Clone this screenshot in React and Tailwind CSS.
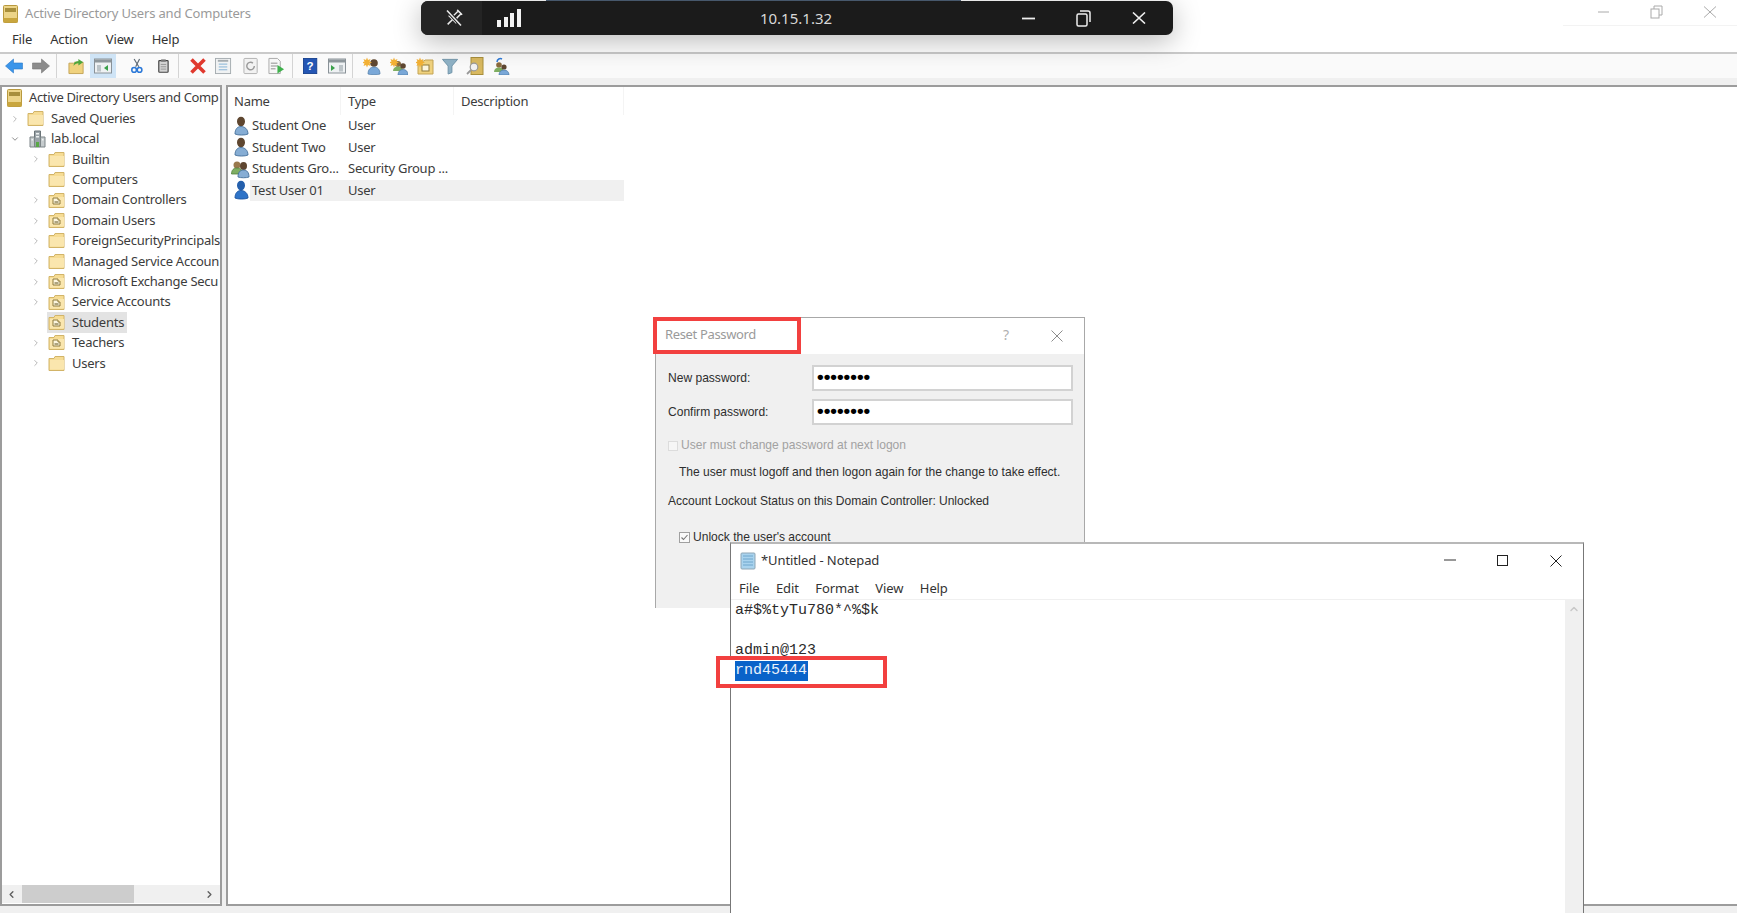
import React from 'react';
import { ChevronRight, ChevronDown, ChevronLeft, ChevronUp } from 'lucide-react';

// small drawings for the MMC tree, list and toolbar
function Folder({ ou }) {
  return (
    <svg width="17" height="17" viewBox="0 0 17 17" className="shrink-0">
      <path d="M1 3.500h5l1-2h9v14H1z" fill="#f6dc94" stroke="#d2b468" strokeWidth="1" />
      <path d="M2 5h14v9.500H2z" fill="#fae6ae" />
      {ou && <path d="M5 6h5v2h2v4H5z" fill="#fdf6df" stroke="#8f7a3a" strokeWidth="1" />}
      {ou && <path d="M6.500 10h4" stroke="#5f5320" strokeWidth="1" />}
    </svg>
  );
}

function AdIcon() {
  return (
    <svg width="15" height="18" viewBox="0 0 15 18" className="shrink-0">
      <rect x="0.500" y="0.500" width="14" height="17" rx="1" fill="#ecd488" stroke="#b8993f" />
      <rect x="2" y="3" width="11" height="4" fill="#a88f3c" />
      <rect x="0.500" y="13" width="14" height="4.500" fill="#c9a63e" />
    </svg>
  );
}

function DomainIcon() {
  return (
    <svg width="17" height="18" viewBox="0 0 17 18" className="shrink-0">
      <path d="M5.500 1h6v16h-6z" fill="#9aa3a8" stroke="#6b7478" />
      <path d="M1 7h4.500v10H1zM11.500 7H16v10h-4.500z" fill="#c6ccce" stroke="#7d8588" />
      <path d="M7 3h3v1.500H7zM7 6h3v1.500H7zM2.500 9h1.500v1.500H2.500zM13 9h1.500v1.500H13z" fill="#eef2f2" />
      <path d="M7 12h3v5H7z" fill="#59a845" />
    </svg>
  );
}

function UserIcon({ selected }) {
  const skin = selected ? '#2560ad' : '#5e4630';
  const body = selected ? '#2f74c8' : '#86add4';
  return (
    <svg width="17" height="20" viewBox="0 0 16 20" className="shrink-0">
      <ellipse cx="7.500" cy="5.500" rx="4" ry="4.800" fill={skin} />
      <path d="M1.500 18c0-5 2.500-7.500 6-7.500s7 2.500 7 7.500c-3 1.400-10 1.400-13 0z" fill={body} stroke={selected ? '#1d55a0' : '#456f9a'} strokeWidth="0.900" />
    </svg>
  );
}

function GroupIcon() {
  return (
    <svg width="19" height="20" viewBox="0 0 19 20" className="shrink-0">
      <circle cx="6" cy="6" r="3.500" fill="#9a7a4e" />
      <path d="M0.500 15c0-4 2.200-6 5.500-6s5.500 2 5.500 6z" fill="#7fae62" stroke="#52803c" strokeWidth="0.800" />
      <ellipse cx="12.500" cy="7" rx="3.500" ry="4" fill="#5e4630" />
      <path d="M7 18c0-4.500 2-7 5.500-7s5.500 2.500 5.500 7c-2.500 1-8.500 1-11 0z" fill="#86add4" stroke="#456f9a" strokeWidth="0.900" />
    </svg>
  );
}

function Star() {
  return <path d="M4 0.500l1 2.500 2.500-1-1 2.500 2.500 1-2.500 1 1 2.500-2.500-1-1 2.500-1-2.500-2.500 1 1-2.500-2.500-1 2.500-1-1-2.500 2.500 1z" fill="#f2b035" />;
}

function Tool({ w = 18, ml = 0, children, vb = '0 0 18 18' }) {
  return (
    <svg width={w} height="18" viewBox={vb} className="shrink-0" style={{ marginLeft: ml }}>
      {children}
    </svg>
  );
}

function Sep({ ml }) {
  return <div className="h-[24px] w-px shrink-0 bg-[#d4d4d4]" style={{ marginLeft: ml }} />;
}

function Toolbar() {
  return (
    <div className="flex h-[24px] items-center bg-[#fafafa] pl-[4px]">
      <Tool w={19}><path d="M1 9l8-7v4h9v6H9v4z" fill="#3a95ea" stroke="#2a78c8" strokeWidth="0.600" /></Tool>
      <Tool w={19} ml={8}><path d="M18 9l-8-7v4H1v6h9v4z" fill="#8c8c8c" stroke="#777" strokeWidth="0.600" /></Tool>
      <Sep ml={6} />
      <Tool w={17} ml={11}>
        <path d="M1 6h5l1-1h9v12H1z" fill="#f0d27e" stroke="#c4a455" />
        <path d="M6 9c0-4 2-5 5-5V1.500L16 5l-5 3.500V6c-2 0-4 1-5 3z" fill="#4ea53c" />
      </Tool>
      <div className="ml-[5px] flex h-[24px] w-[26px] shrink-0 items-center justify-center bg-[#cfe4f6]">
        <Tool>
          <rect x="0.500" y="2" width="17" height="14" fill="#eef1f3" stroke="#8a9298" />
          <rect x="1" y="2.500" width="16" height="3" fill="#8e979c" />
          <rect x="3" y="8" width="4" height="6.500" fill="#bcc4c8" />
          <path d="M14 8v6l-4-3z" fill="#3aa04a" />
        </Tool>
      </div>
      <Tool w={14} ml={15}>
        <path d="M11 0L6 10M4 0l6 10" stroke="#5e6a75" strokeWidth="1.500" />
        <circle cx="4" cy="14" r="3" fill="none" stroke="#2c79d8" strokeWidth="2" />
        <circle cx="11" cy="14" r="3" fill="none" stroke="#2c79d8" strokeWidth="2" />
      </Tool>
      <Tool w={14} ml={13}>
        <rect x="1" y="2" width="12" height="15" rx="1" fill="#d4d4d4" stroke="#444" strokeWidth="1.500" />
        <rect x="4" y="0.500" width="6" height="3" fill="#777" />
        <path d="M3.500 7h7M3.500 10h7M3.500 13h7" stroke="#888" />
      </Tool>
      <Sep ml={6} />
      <Tool ml={10}><path d="M2.500 2.500l13 13M15.500 2.500l-13 13" stroke="#e0392e" strokeWidth="3.600" /></Tool>
      <Tool w={17} ml={8}>
        <rect x="0.500" y="1" width="16" height="16" fill="#f0f2f3" stroke="#a5acb0" />
        <path d="M3 2.500h11v2H3z" fill="#a5acb0" />
        <path d="M4 7h9M4 10h9M4 13h9" stroke="#7fb0d6" />
      </Tool>
      <Tool w={17} ml={11}>
        <rect x="1" y="1" width="14" height="16" rx="1" fill="#f2f2f2" stroke="#b0b0b0" />
        <path d="M12 9a4 4 0 1 1-1.500-3.100" fill="none" stroke="#9a9a9a" strokeWidth="1.500" />
      </Tool>
      <Tool w={17} ml={8}>
        <path d="M1 1h9l3 3v13H1z" fill="#f7f7f7" stroke="#a8a8a8" />
        <path d="M3 6h7M3 9h7M3 12h5" stroke="#888" />
        <path d="M10 8l7 4.500-7 4.500z" fill="#3fb14c" />
      </Tool>
      <Sep ml={7} />
      <Tool w={16} ml={10}>
        <rect x="0.500" y="0.500" width="15" height="17" fill="#2456b4" stroke="#17408e" />
        <text x="8" y="14" textAnchor="middle" fontSize="13" fontWeight="700" fontFamily="'Liberation Sans', sans-serif" fill="#fff">?</text>
      </Tool>
      <Tool ml={9}>
        <rect x="0.500" y="2" width="17" height="14" fill="#eef1f3" stroke="#8a9298" />
        <rect x="1" y="2.500" width="16" height="3" fill="#8e979c" />
        <path d="M3 8v6l4-3z" fill="#3aa04a" />
        <rect x="11" y="8" width="4" height="6.500" fill="#bcc4c8" />
      </Tool>
      <Sep ml={6} />
      <Tool w={19} ml={10} vb="0 0 19 18">
        <circle cx="11" cy="6" r="3.800" fill="#5e4630" />
        <path d="M5 17c0-4.500 2.500-7 6-7s6 2.500 6 7c-3 1-9 1-12 0z" fill="#7aa8d8" stroke="#4f7ba6" strokeWidth="0.700" />
        <Star />
      </Tool>
      <Tool w={18} ml={8}>
        <circle cx="8" cy="7" r="3" fill="#8a6a3e" />
        <path d="M3 14c0-3 2-4.500 5-4.500s5 1.500 5 4.500z" fill="#7fae62" />
        <circle cx="13" cy="9" r="2.800" fill="#5e4630" />
        <path d="M8 18c0-3.500 2-5.500 5-5.500s5 2 5 5.500z" fill="#7aa8d8" stroke="#4f7ba6" strokeWidth="0.700" />
        <Star />
      </Tool>
      <Tool w={18} ml={8}>
        <path d="M2 4h6l1-1h8v14H2z" fill="#f0d27e" stroke="#c4a455" />
        <rect x="6" y="8" width="7" height="6" fill="#fdf6df" stroke="#8f7a3a" />
        <Star />
      </Tool>
      <Tool w={17} ml={8}><path d="M0.500 2h16l-6 7v7l-4 1.500V9z" fill="#8fb2c6" stroke="#6f93a8" /></Tool>
      <Tool w={18} ml={7}>
        <rect x="5" y="0.500" width="12" height="17" fill="#d9b960" stroke="#a88f3c" />
        <circle cx="8" cy="10" r="3.800" fill="#f2f2f2" stroke="#999" strokeWidth="1.200" />
        <path d="M5 13l-4 4" stroke="#999" strokeWidth="1.800" />
      </Tool>
      <Tool w={18} ml={8}>
        <path d="M5 5c0-3 3-4 5-3" fill="none" stroke="#2c79d8" strokeWidth="1.500" />
        <circle cx="7" cy="8" r="2.800" fill="#8a6a3e" />
        <path d="M2 15c0-3 2-4.500 5-4.500s5 1.500 5 4.500z" fill="#7fae62" />
        <circle cx="12" cy="10" r="2.600" fill="#5e4630" />
        <path d="M7 18c0-3 2-5 5-5s5 2 5 5z" fill="#7aa8d8" stroke="#4f7ba6" strokeWidth="0.700" />
      </Tool>
    </div>
  );
}

const tree = [
  { name: 'Builtin', arrow: true },
  { name: 'Computers' },
  { name: 'Domain Controllers', arrow: true, ou: true },
  { name: 'Domain Users', arrow: true, ou: true },
  { name: 'ForeignSecurityPrincipals', arrow: true },
  { name: 'Managed Service Accoun', arrow: true },
  { name: 'Microsoft Exchange Secu', arrow: true, ou: true },
  { name: 'Service Accounts', arrow: true, ou: true },
  { name: 'Students', ou: true, selected: true },
  { name: 'Teachers', arrow: true, ou: true },
  { name: 'Users', arrow: true },
];

function Tree() {
  return (
    <div className="flex w-[222px] shrink-0 flex-col border-2 border-[#9c9c9c] bg-white">
      <div className="flex-1 overflow-hidden whitespace-nowrap pt-[1px] text-[13px] tracking-[-0.250px] text-[#3c3c3c]">
        <div className="flex h-[20.400px] items-center pl-[5px]">
          <AdIcon />
          <span className="ml-[7px] tracking-[-0.350px]">Active Directory Users and Comp</span>
        </div>
        <div className="flex h-[20.400px] items-center pl-[8px]">
          <ChevronRight size={10} className="text-[#aaa]" />
          <span className="ml-[7px]"><Folder /></span>
          <span className="ml-[7px]">Saved Queries</span>
        </div>
        <div className="flex h-[20.400px] items-center pl-[8px]">
          <ChevronDown size={10} className="text-[#777]" />
          <span className="ml-[9px]"><DomainIcon /></span>
          <span className="ml-[5px]">lab.local</span>
        </div>
        {tree.map((t) => (
          <div key={t.name} className="flex h-[20.400px] items-center pl-[29px]">
            <span className="w-[10px] shrink-0">{t.arrow && <ChevronRight size={10} className="text-[#aaa]" />}</span>
            <div className={`ml-[6px] flex h-[20.400px] items-center pl-[1px] pr-[3px] ${t.selected ? 'bg-[#e3e3e3]' : ''}`}>
              <Folder ou={t.ou} />
              <span className="ml-[7px]">{t.name}</span>
            </div>
          </div>
        ))}
      </div>
      <div className="mb-[1px] flex h-[18px] shrink-0 items-center justify-between bg-[#f0f0f0]">
        <div className="flex h-full items-center">
          <ChevronLeft size={11} strokeWidth={3} className="ml-[4px] text-[#606060]" />
          <div className="ml-[5px] h-full w-[112px] bg-[#cdcdcd]" />
        </div>
        <ChevronRight size={11} strokeWidth={3} className="mr-[5px] text-[#606060]" />
      </div>
    </div>
  );
}

function ListRow({ name, type, icon, selected }) {
  return (
    <div className="flex h-[21.500px] w-[396px] items-center">
      <div className="flex w-[22px] shrink-0 justify-end">{icon}</div>
      <div className={`flex h-full flex-1 items-center pl-[2px] ${selected ? 'bg-[#f0f0f0]' : ''}`}>
        <span className="w-[96px] shrink-0 whitespace-nowrap">{name}</span>
        <span className="whitespace-nowrap">{type}</span>
      </div>
    </div>
  );
}

function List() {
  return (
    <div className="ml-[4px] min-w-0 flex-1 border-2 border-r-0 border-[#9c9c9c] bg-white text-[13px] tracking-[-0.250px] text-[#3c3c3c]">
      <div className="flex h-[28px] w-[396px] items-center">
        <div className="h-full w-[113px] border-r border-[#f4f4f4] pl-[6px] leading-[29px]">Name</div>
        <div className="h-full w-[113px] border-r border-[#f4f4f4] pl-[7px] leading-[29px]">Type</div>
        <div className="h-full w-[170px] border-r border-[#f4f4f4] pl-[7px] leading-[29px]">Description</div>
      </div>
      <ListRow name="Student One" type="User" icon={<UserIcon />} />
      <ListRow name="Student Two" type="User" icon={<UserIcon />} />
      <ListRow name="Students Gro..." type="Security Group ..." icon={<GroupIcon />} />
      <ListRow name="Test User 01" type="User" icon={<UserIcon selected />} selected />
    </div>
  );
}

function RemoteBar() {
  return (
    <div className="absolute left-[421px] top-[1px] flex h-[34px] w-[752px] items-center rounded-[7px] bg-[#1b1b1b] text-[#e8e8e8] shadow-[0_6px_28px_rgba(0,0,0,0.28)]">
      <div className="flex h-full w-[61px] items-center justify-center rounded-l-[7px] bg-[#242424]">
        <svg width="20" height="20" viewBox="0 0 20 20" fill="none" stroke="#ececec" strokeWidth="1.500" className="ml-[4px]">
          <g transform="rotate(45 10 10)">
            <path d="M6.500 2h7M8 2v6l-2.500 4h9L12 8V2M10 12v7" />
          </g>
          <path d="M3 2.500L17 17.500" stroke="#242424" strokeWidth="3.500" />
          <path d="M3 2.500L17 17.500" />
        </svg>
      </div>
      <svg width="24" height="18" viewBox="0 0 24 18" className="ml-[15px] shrink-0">
        <path d="M0 11h4v7H0zM7 8h4v10H7zM13 4h4v14h-4zM20 0h4v18h-4z" fill="#f2f2f2" />
      </svg>
      <div className="flex-1 pl-[50px] text-center font-['Noto_Sans'] text-[15px] text-[#d8d8d8]">10.15.1.32</div>
      <svg width="16" height="3" viewBox="0 0 16 3" className="shrink-0"><path d="M1 1.500h13" stroke="#eee" strokeWidth="1.800" /></svg>
      <svg width="18" height="17" viewBox="0 0 18 17" className="ml-[38px] shrink-0" fill="none" stroke="#eee" strokeWidth="1.500">
        <rect x="2" y="4" width="10" height="12" rx="1.500" />
        <path d="M5 1h8a2 2 0 0 1 2 2v9" />
      </svg>
      <svg width="14" height="12" viewBox="0 0 14 12" className="ml-[39px] mr-[27px] shrink-0"><path d="M1 0.500l12 11M13 0.500l-12 11" stroke="#eee" strokeWidth="1.600" /></svg>
    </div>
  );
}

function DialogRow({ label, dots }) {
  return (
    <div className="flex items-center">
      <span className="w-[144px] shrink-0">{label}</span>
      <div className="flex h-[26px] w-[261px] items-center border-2 border-[#d2d2d2] bg-white pb-[3px] pl-[3px] text-[19px] font-bold leading-none text-black">
        {dots}
      </div>
    </div>
  );
}

function ResetDialog() {
  return (
    <div className="absolute left-[655px] top-[317px] flex h-[291px] w-[430px] flex-col border-r border-t border-l border-[#a8a8a8] font-['Liberation_Sans'] text-[12.050px] text-[#2e2e2e]">
      <div className="relative flex h-[36px] shrink-0 items-center bg-white">
        <span className="ml-[9px] mt-[-2px] font-['Noto_Sans'] text-[13px] tracking-[-0.350px] text-[#9a9a9a]">Reset Password</span>
        <span className="absolute left-[347px] top-[6px] font-['Noto_Sans'] text-[14px] text-[#b0b0b0]">?</span>
        <svg width="12" height="12" viewBox="0 0 12 12" className="absolute left-[395px] top-[12px]"><path d="M0.500 0.500l11 11M11.500 0.500l-11 11" stroke="#8c8c8c" /></svg>
        <div className="absolute -left-[3px] -top-[1px] h-[37px] w-[148px] border-[4px] border-[#f2403f]" />
      </div>
      <div className="flex-1 bg-[#f0f0f0] pl-[12px] pt-[11px]">
        <div className="flex flex-col gap-[8px]">
          <DialogRow label="New password:" dots="••••••••" />
          <DialogRow label="Confirm password:" dots="••••••••" />
        </div>
        <div className="mt-[12px] flex h-[17px] items-center text-[#a2a2a2]">
          <span className="h-[10px] w-[10px] border border-[#dcdcdc] bg-[#f6f6f6]" />
          <span className="ml-[3px]">User must change password at next logon</span>
        </div>
        <div className="ml-[11px] mt-[10px] h-[17px] leading-[17px]">The user must logoff and then logon again for the change to take effect.</div>
        <div className="mt-[12px] h-[17px] leading-[17px] tracking-[-0.030px]">Account Lockout Status on this Domain Controller: Unlocked</div>
        <div className="ml-[11px] mt-[19px] flex h-[17px] items-center">
          <svg width="11" height="11" viewBox="0 0 11 11" className="shrink-0">
            <rect x="0.500" y="0.500" width="10" height="10" fill="#fafafa" stroke="#a0a0a0" />
            <path d="M2.500 5.500l2 2 4-4.500" fill="none" stroke="#777" strokeWidth="1.100" />
          </svg>
          <span className="ml-[3px]">Unlock the user's account</span>
        </div>
      </div>
    </div>
  );
}

function Notepad() {
  return (
    <div className="absolute bottom-0 left-[730px] top-[542px] flex w-[854px] flex-col border-x border-x-[#777] border-t-2 border-t-[#b8b8b8] bg-white font-['Noto_Sans'] text-[13px] tracking-[-0.100px] text-[#333]">
      <div className="flex h-[33px] shrink-0 items-center pl-[8px]">
        <svg width="18" height="18" viewBox="0 0 18 18" className="shrink-0">
          <rect x="2" y="1" width="14" height="16" rx="1" fill="#a9d3ee" stroke="#8fa6b5" />
          <path d="M4 4h10M4 7h10M4 10h10M4 13h10" stroke="#6fa6cc" />
        </svg>
        <span className="ml-[4px]">*Untitled - Notepad</span>
        <svg width="12" height="2" viewBox="0 0 12 2" className="ml-auto mt-[-2px] shrink-0"><path d="M0 1h12" stroke="#333" /></svg>
        <div className="ml-[41px] h-[11px] w-[11px] shrink-0 border border-[#222]" />
        <svg width="12" height="12" viewBox="0 0 12 12" className="ml-[42px] mr-[21px] shrink-0"><path d="M0.500 0.500l11 11M11.500 0.500l-11 11" stroke="#222" /></svg>
      </div>
      <div className="flex h-[23px] shrink-0 items-center gap-[16.500px] border-b border-[#f0f0f0] pl-[8px] pt-[2px]">
        <span>File</span>
        <span>Edit</span>
        <span>Format</span>
        <span>View</span>
        <span>Help</span>
      </div>
      <div className="flex min-h-0 flex-1">
        <div className="relative flex-1 pl-[4px] pt-[1px] font-['Liberation_Mono'] text-[15px] leading-[20px] tracking-normal text-[#2b2b2b]">
          <div className="absolute -left-[15px] top-[56px] h-[32px] w-[171px] border-[4px] border-[#f2403f] bg-white" />
          <div className="relative h-[20px]">a#$%tyTu780*^%$k</div>
          <div className="relative h-[20px]" />
          <div className="relative h-[20px]">admin@123</div>
          <div className="relative h-[20px]"><span className="inline-block h-[20px] w-[73px] bg-[#0a63c9] text-[#eaf2fb]">rnd45444</span></div>
        </div>
        <div className="flex w-[18px] shrink-0 justify-center bg-[#f0f0f0] pt-[3px]">
          <ChevronUp size={12} strokeWidth={3} className="text-[#c8c8c8]" />
        </div>
      </div>
    </div>
  );
}

export default function App() {
  return (
    <div className="relative flex h-[913px] w-[1737px] flex-col overflow-hidden bg-white font-['Noto_Sans',sans-serif]">
      <div className="relative flex h-[27px] shrink-0 items-center pl-[3px] text-[13px] tracking-[-0.170px] text-[#9a9a9a]">
        <AdIcon />
        <span className="ml-[7px]">Active Directory Users and Computers</span>
        <div className="absolute bottom-[1px] left-[1563px] right-0 h-px bg-[#f3f3f3]" />
        <svg width="140" height="14" viewBox="0 0 140 14" className="absolute left-[1598px] top-[5px]" fill="none" stroke="#aaa">
          <path d="M0 7h11" />
          <rect x="53" y="4" width="8" height="9" />
          <path d="M56 4V1h8v9h-3" />
          <path d="M106 1.500l12 11M118 1.500l-12 11" />
        </svg>
      </div>
      <div className="flex h-[27px] shrink-0 items-start gap-[18px] border-b-2 border-[#cacaca] pl-[12px] pt-[3px] text-[13px] tracking-[-0.150px] text-[#333]">
        <span>File</span>
        <span>Action</span>
        <span>View</span>
        <span>Help</span>
      </div>
      <Toolbar />
      <div className="h-[7px] shrink-0 bg-[#f0f0f0]" />
      <div className="flex min-h-0 flex-1 bg-[#f0f0f0] pb-[7px]">
        <Tree />
        <List />
      </div>
      <RemoteBar />
      <div className="absolute left-[546px] top-0 h-px w-[415px] bg-[#47586c]" />
      <ResetDialog />
      <Notepad />
    </div>
  );
}
